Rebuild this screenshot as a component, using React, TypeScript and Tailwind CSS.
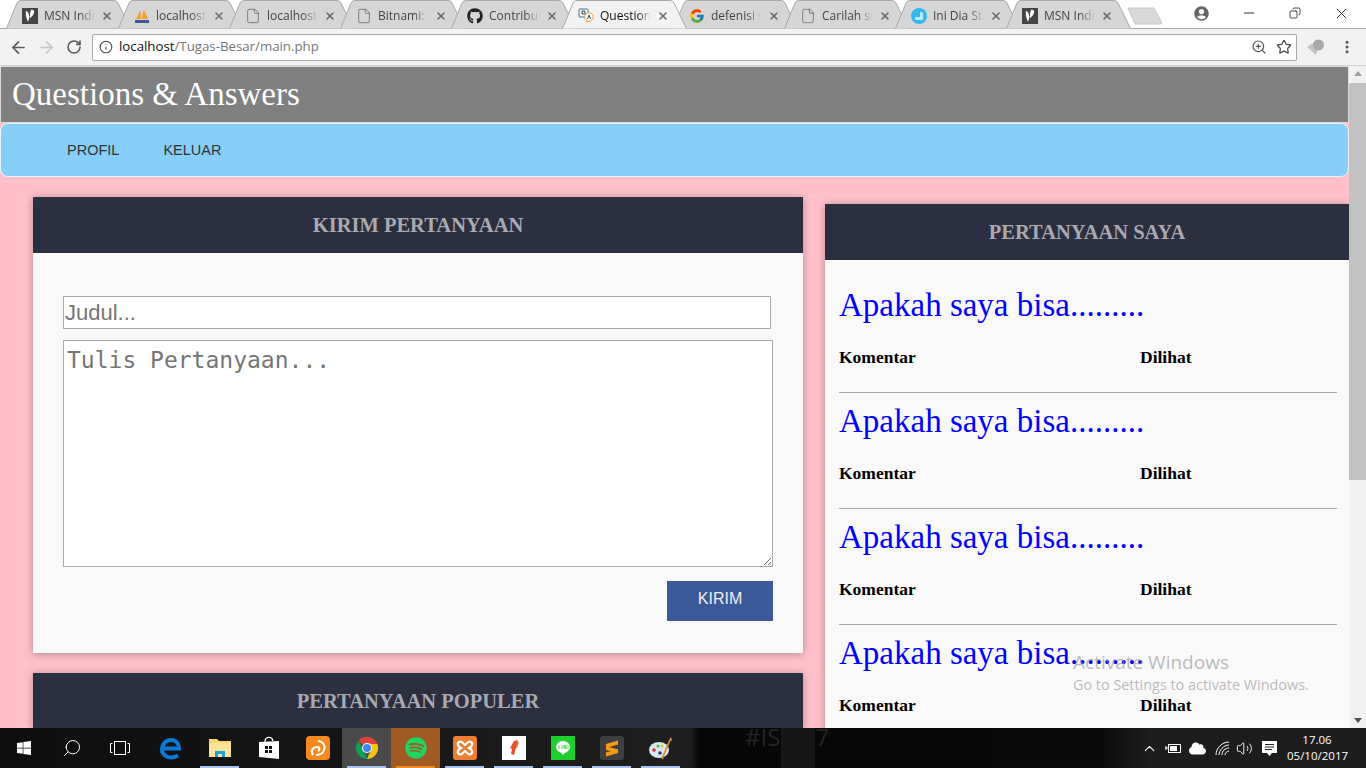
import { ArrowLeft, ArrowRight, ChevronUp, File, Info, MoreVertical, RotateCw, Search, Star, Volume2, X, ZoomIn, Minus, Copy } from 'lucide-react';
import { FaGithub, FaSpotify, FaWindows, FaCloud, FaUserCircle } from 'react-icons/fa';
import { FcGoogle } from 'react-icons/fc';
import type { ReactNode } from 'react';

const MsnIcon = () => (
  <svg width="16" height="16" viewBox="0 0 16 16">
    <rect width="16" height="16" fill="#444" />
    <path d="M4 3c2 0 3 3 3.500 6L6 14c-1-3-3-7-2-11zM9 2c2-1 4 1 3 3-1 2-2 4-4 5 0-3 0-6 1-8z" fill="#fff" />
  </svg>
);

const PmaIcon = () => (
  <svg width="16" height="16" viewBox="0 0 16 16">
    <path d="M2 11C4 8 5 5 6 2c1 3 1 6 1 9zM8 11c0-4 1-7 2-9 1 3 3 6 4 9z" fill="#f0a030" />
    <rect x="1" y="12" width="14" height="3" fill="#3a5a9a" />
  </svg>
);

const QaIcon = () => (
  <svg width="16" height="16" viewBox="0 0 16 16">
    <rect x="1" y="1" width="9" height="8" rx="1" fill="#fff" stroke="#4a6a90" />
    <circle cx="11" cy="9" r="4.200" fill="#fff" stroke="#e89a30" />
    <path d="M9 13l-1 2 3-1.500z" fill="#e89a30" />
    <path d="M4 3h3v3H4z" fill="none" stroke="#234" strokeWidth="0.900" />
    <path d="M9.500 11l1.500-4 1.500 4" fill="none" stroke="#234" strokeWidth="0.900" />
  </svg>
);

const StudioIcon = () => (
  <svg width="16" height="16" viewBox="0 0 16 16">
    <circle cx="8" cy="8" r="8" fill="#35b8ee" />
    <rect x="4" y="4" width="8" height="8" rx="1.500" fill="#bdeafb" />
    <rect x="4" y="4" width="5" height="5" fill="#35b8ee" />
  </svg>
);

const PageIcon = () => <File size={16} strokeWidth={1.200} className="text-[#666]" />;

const tabs: { title: string; icon: ReactNode; active?: boolean }[] = [
  { title: 'MSN Indonesia', icon: <MsnIcon /> },
  { title: 'localhost / phpMyAdmin', icon: <PmaIcon /> },
  { title: 'localhost', icon: <PageIcon /> },
  { title: 'Bitnami: Open', icon: <PageIcon /> },
  { title: 'Contribute', icon: <FaGithub size={16} className="text-[#222]" /> },
  { title: 'Questions & Answers', icon: <QaIcon />, active: true },
  { title: 'defenisi sistem', icon: <FcGoogle size={16} /> },
  { title: 'Carilah soal', icon: <PageIcon /> },
  { title: 'Ini Dia Startup', icon: <StudioIcon /> },
  { title: 'MSN Indonesia', icon: <MsnIcon /> },
];

const ChromeTab = ({ title, icon, active, first }: { title: string; icon: ReactNode; active?: boolean; first?: boolean }) => (
  <div className={`relative flex h-[28px] items-center pl-4 pt-[3px] ${first ? 'w-[112px]' : 'w-[111px]'} ${active ? 'z-10' : ''}`}>
    <svg width="125" height="29" viewBox="0 0 125 29" className="absolute left-0 top-0">
      <path
        d="M0.500 28.500 L11 3 Q12 0.500 15 0.500 L108 0.500 Q111 0.500 112 3 L124.500 28.500"
        fill={active ? '#f2f2f2' : '#d6d6d6'}
        stroke="#a8a8a8"
      />
    </svg>
    <div className="relative flex items-center gap-[6px]">
      <span className="flex h-4 w-4 items-center justify-center">{icon}</span>
      <span
        className={
          active
            ? 'w-[51px] overflow-hidden whitespace-nowrap text-[12px] text-[#111] [mask-image:linear-gradient(to_right,black_75%,transparent)]'
            : 'w-[51px] overflow-hidden whitespace-nowrap text-[12px] text-[#444] [mask-image:linear-gradient(to_right,black_70%,transparent)]'
        }
      >
        {title}
      </span>
      <X size={12} strokeWidth={3} className="text-[#666]" />
    </div>
  </div>
);

const ChromeTop = () => (
  <div className="font-['Open_Sans',sans-serif]">
    <div className="relative flex h-[28px] bg-white pl-[6px]">
      {tabs.map((t, i) => (
        <ChromeTab key={i} title={t.title} icon={t.icon} active={t.active} first={i === 0} />
      ))}
      <svg width="36" height="18" viewBox="0 0 36 18" className="z-10 ml-[10px] mt-[7px]">
        <path d="M1 1 H27 L35 16 Q35 17 33 17 H8 Z" fill="#d9d9d9" stroke="#c8c8c8" />
      </svg>
      <div className="ml-auto flex h-[28px] items-center pb-[2px] text-[#111]">
        <FaUserCircle size={15} className="mr-[32px] text-[#666]" />
        <Minus size={16} strokeWidth={1.300} className="mr-[32px]" />
        <Copy size={12} strokeWidth={1.500} className="mr-[32px] -scale-x-100" />
        <X size={17} strokeWidth={1.200} className="mr-[16px]" />
      </div>
    </div>
    <div className="flex h-[38px] items-center border-t border-b border-t-[#a8a8a8] border-b-[#d0d0d0] bg-[#f2f2f2]">
      <ArrowLeft size={19} strokeWidth={2.200} className="ml-[9px] text-[#5a5a5a]" />
      <ArrowRight size={19} strokeWidth={2} className="ml-[9px] text-[#c4c4c4]" />
      <RotateCw size={16} strokeWidth={2.400} className="ml-[10px] text-[#5a5a5a]" />
      <div className="ml-[10px] flex h-[27px] w-[1205px] items-center rounded-[2px] border border-[#a9a9a9] bg-white">
        <Info size={14} strokeWidth={1.800} className="ml-[6px] text-[#444]" />
        <span className="ml-[6px] text-[13.250px] text-[#111]">localhost</span>
        <span className="text-[13.250px] text-[#777]">/Tugas-Besar/main.php</span>
        <ZoomIn size={16} strokeWidth={1.800} className="ml-auto mr-[9px] text-[#555]" />
        <Star size={16} strokeWidth={1.800} className="mr-[4px] text-[#444]" />
      </div>
      <svg width="18" height="16" viewBox="0 0 18 16" className="ml-[10px]">
        <path d="M0 8l8-5 4 1-3 12z" fill="#c4c4c4" />
        <circle cx="11.500" cy="6" r="5.500" fill="#a8a8a8" />
      </svg>
      <MoreVertical size={16} strokeWidth={2.500} className="ml-[14px] text-[#555]" />
    </div>
  </div>
);

const Scrollbar = () => (
  <div className="flex w-[17px] shrink-0 flex-col items-center bg-[#f1f1f1]">
    <div className="mt-[5px] h-0 w-0 border-x-[4px] border-b-[5px] border-x-transparent border-b-[#a3a3a3]" />
    <div className="mt-[7px] h-[397px] w-[17px] bg-[#c1c1c1]" />
    <div className="mt-auto mb-[5px] h-0 w-0 border-x-[4px] border-t-[5px] border-x-transparent border-t-[#505050]" />
  </div>
);

const CardHeader = ({ children }: { children: ReactNode }) => (
  <div className="flex h-14 items-center justify-center bg-[#2c2f3f] text-[20.500px] font-bold text-[#a9a9b2]">{children}</div>
);

const questionRows = [0, 1, 2, 3];

const Page = () => (
  <div className="relative h-[662px] w-[1349px] overflow-hidden bg-[#ffc0cb] font-['Liberation_Serif',serif]">
    <div className="flex h-[57px] items-center border border-[#dcdcdc] bg-[#808080] pl-[11px] text-[33px] text-white">
      Questions &amp; Answers
    </div>
    <nav className="flex h-[54px] items-center gap-[44px] rounded-lg border border-[#e8f4fc] bg-[#87cefa] pl-[66px] pt-[2px] font-['Liberation_Sans',sans-serif] text-[14.500px] text-[#333]">
      <span>PROFIL</span>
      <span>KELUAR</span>
    </nav>
    <div className="flex gap-[22px] pl-[33px] pt-[20px]">
      <div className="flex w-[770px] shrink-0 flex-col gap-5">
        <section className="h-[456px] bg-[#f9f9f9] shadow-[0_1px_8px_rgba(0,0,0,0.3)]">
          <CardHeader>KIRIM PERTANYAAN</CardHeader>
          <div className="flex flex-col pl-[30px] pt-[43px]">
            <input
              placeholder="Judul..."
              className="h-[33px] w-[708px] border border-[#a9a9a9] bg-white px-[1px] font-['Liberation_Sans',sans-serif] text-[22px] outline-none placeholder:text-[#757575]"
            />
            <textarea
              placeholder="Tulis Pertanyaan..."
              className="mt-[11px] h-[227px] w-[710px] border border-[#a9a9a9] bg-white px-[3px] pt-[4px] font-['DejaVu_Sans_Mono',monospace] text-[23px] leading-[31px] outline-none placeholder:text-[#757575]"
            />
            <button className="ml-[604px] mt-[14px] h-10 w-[106px] bg-[#3b5998] pb-1 font-['Liberation_Sans',sans-serif] text-[16px] text-[#f0f0f0]">
              KIRIM
            </button>
          </div>
        </section>
        <section className="bg-[#f9f9f9] shadow-[0_1px_8px_rgba(0,0,0,0.3)]">
          <CardHeader>PERTANYAAN POPULER</CardHeader>
        </section>
      </div>
      <section className="mt-[7px] h-[600px] w-[524px] shrink-0 bg-[#f9f9f9] shadow-[0_1px_8px_rgba(0,0,0,0.3)]">
        <CardHeader>PERTANYAAN SAYA</CardHeader>
        <div className="pl-[14px] pr-3 pt-[17px]">
          {questionRows.map((r) => (
            <div key={r} className="h-[116px] border-b border-[#a9a9a9] pt-[6px] last:border-b-0">
              <div className="h-[44px] text-[33px] leading-[44px] text-[#0000ff]">Apakah saya bisa.........</div>
              <div className="mt-[18px] flex text-[17.500px] font-bold leading-[24px] text-black">
                <span className="w-[301px]">Komentar</span>
                <span>Dilihat</span>
              </div>
            </div>
          ))}
        </div>
      </section>
    </div>
  </div>
);

const EdgeLogo = () => (
  <svg width="24" height="24" viewBox="0 0 24 24">
    <path d="M4 12.500h16c0-5-3-8.500-8-8.500-5 0-9 4-9 9.500 0 5.500 5 8 9 8 3 0 5-.8 7-2" fill="none" stroke="#0a78d7" strokeWidth="4" />
  </svg>
);

const TaskViewIcon = () => (
  <svg width="20" height="14" viewBox="0 0 20 14" fill="none" stroke="#fff">
    <rect x="4.500" y="0.500" width="11" height="13" />
    <path d="M2.500 2.500H.5v9h2M17.500 2.500h2v9h-2" />
  </svg>
);

const ChromeLogo = () => (
  <svg width="24" height="24" viewBox="0 0 24 24">
    <path d="M12 12 L3.400 5 A11 11 0 0 1 22.300 8 L12 8z" fill="#db4437" />
    <path d="M12 23 A11 11 0 0 1 3.400 5 L9 14z" fill="#0f9d58" />
    <path d="M22.300 8 A11 11 0 0 1 12 23 L16 14 L12 8z" fill="#f4c20d" />
    <circle cx="12" cy="12" r="5" fill="#fff" />
    <circle cx="12" cy="12" r="4" fill="#4285f4" />
  </svg>
);

const FolderLogo = () => (
  <svg width="24" height="20" viewBox="0 0 24 20">
    <path d="M1 1h8l2 2h12v16H1z" fill="#f8d775" />
    <rect x="1" y="5" width="22" height="14" fill="#fbe59a" />
    <path d="M7 19v-6h10v6h-3v-3h-4v3z" fill="#1f9ee0" />
  </svg>
);

const StoreLogo = () => (
  <svg width="22" height="24" viewBox="0 0 22 24">
    <path d="M1 6l20-1v18l-20-2z" fill="#fff" />
    <path d="M7 6c0-6 7-6 8-1" fill="none" stroke="#fff" strokeWidth="1.300" />
    <path d="M7 10h3v3H7zM11 10h3v3h-3zM7 14h3v3H7zM11 14h3v3h-3z" fill="#111" />
  </svg>
);

const UcLogo = () => (
  <svg width="24" height="24" viewBox="0 0 24 24">
    <rect width="24" height="24" rx="4" fill="#f7891f" />
    <path d="M7 19c-3-4 0-8 4-8 3 0 3 3 1 4M12 5c4 0 8 4 6 9-1 3-4 5-8 5" fill="none" stroke="#fff" strokeWidth="2" />
  </svg>
);

const XamppLogo = () => (
  <svg width="24" height="24" viewBox="0 0 24 24">
    <rect width="24" height="24" rx="3" fill="#ef7d32" />
    <path d="M6 6c3-2 4 2 6 3 2-1 3-5 6-3s0 5-2 6c2 1 5 4 2 6s-4-2-6-3c-2 1-3 5-6 3s0-5 2-6C6 11 3 8 6 6z" fill="none" stroke="#fff" strokeWidth="2.200" />
  </svg>
);

const PdfLogo = () => (
  <svg width="24" height="24" viewBox="0 0 24 24">
    <rect width="24" height="24" fill="#fff" />
    <path d="M12 5l4-1-2 8-2 7-3-1 1-5-2-1z" fill="#e8502a" />
    <path d="M15 6h2l-2 6-1 0z" fill="#f07040" />
  </svg>
);

const LineLogo = () => (
  <svg width="24" height="24" viewBox="0 0 24 24">
    <rect width="24" height="24" fill="#1fce2e" />
    <ellipse cx="12" cy="11" rx="7" ry="6" fill="#fff" />
    <path d="M10 16l2 3 3-3z" fill="#fff" />
    <path d="M8 9v4M11 9v4M13 13V9l2 4V9M17 9v4" stroke="#1fce2e" strokeWidth="0.800" fill="none" />
  </svg>
);

const SublimeLogo = () => (
  <svg width="24" height="24" viewBox="0 0 24 24">
    <rect width="24" height="24" rx="3" fill="#3f3f3f" />
    <path d="M6 8l12-3.500v4L6 12zM6 10l12 3.500v4L6 14zM6 16.500l12-3.500v4L6 20.500z" fill="#f89a12" />
  </svg>
);

const PaintLogo = () => (
  <svg width="24" height="24" viewBox="0 0 24 24">
    <ellipse cx="10" cy="14" rx="10" ry="8" fill="#d6e8f5" />
    <circle cx="5" cy="14" r="1.800" fill="#d83a30" />
    <circle cx="9" cy="10" r="1.600" fill="#5cb040" />
    <circle cx="13" cy="10" r="1.500" fill="#e8c030" />
    <circle cx="11" cy="17" r="1.800" fill="#2a3a60" />
    <path d="M13 23L21 4" stroke="#d98a20" strokeWidth="1.800" />
    <path d="M20 4l2-3 1 4z" fill="#c8a060" />
  </svg>
);

const taskItems: { key: string; icon: ReactNode; open?: boolean; bg?: string; bar?: string }[] = [
  { key: 'edge', icon: <EdgeLogo /> },
  { key: 'folder', icon: <FolderLogo />, open: true },
  { key: 'store', icon: <StoreLogo /> },
  { key: 'uc', icon: <UcLogo /> },
  { key: 'chrome', icon: <ChromeLogo />, open: true, bg: 'bg-[#4a4a4a]' },
  { key: 'spotify', icon: <FaSpotify size={22} className="text-[#1ed760]" />, open: true, bg: 'bg-[#a05a24]', bar: 'bg-[#f08a24]' },
  { key: 'xampp', icon: <XamppLogo />, open: true },
  { key: 'pdf', icon: <PdfLogo />, open: true },
  { key: 'line', icon: <LineLogo />, open: true },
  { key: 'sublime', icon: <SublimeLogo />, open: true },
  { key: 'paint', icon: <PaintLogo />, open: true },
];

const Taskbar = () => (
  <div className="relative flex h-10 items-center overflow-hidden bg-[linear-gradient(to_right,#0d0d0d,#1f1f1f_690px,#060606_700px,#0a0a0a_1100px,#1d1d1d_1150px)] text-white">
    <span className="absolute left-[745px] top-[-9px] font-['Open_Sans',sans-serif] text-[24px] text-[#242424]">#ISC 17</span>
    <div className="absolute bottom-0 left-[781px] top-0 w-[34px] bg-[#161616]" />
    <FaWindows size={16} className="ml-4" />
    <Search size={20} strokeWidth={1.200} className="ml-[30px] -scale-x-100" />
    <span className="ml-[28px]">
      <TaskViewIcon />
    </span>
    <div className="relative ml-[16px] flex h-10">
      {taskItems.map((t) => (
        <div key={t.key} className={`relative flex h-10 w-[49px] items-center justify-center ${t.bg ?? ''}`}>
          {t.icon}
          {t.open && <div className={`absolute bottom-0 left-[5px] right-[5px] h-[2px] ${t.bar ?? 'bg-[#a9c4f0]'}`} />}
        </div>
      ))}
    </div>
    <div className="relative ml-auto flex items-center pr-[19px]">
      <ChevronUp size={17} strokeWidth={1.500} className="mr-[7px]" />
      <svg width="16" height="12" viewBox="0 0 16 12" className="mr-[8px]">
        <rect x="3.500" y="2.500" width="12" height="8" fill="none" stroke="#fff" />
        <rect x="5" y="4" width="7" height="5" fill="#fff" />
        <path d="M0 6h3M1 4v4" stroke="#fff" />
      </svg>
      <FaCloud size={17} className="mr-[9px]" />
      <svg width="15" height="15" viewBox="0 0 15 15" fill="none" stroke="#fff" className="mr-[6px]">
        <path d="M1 14c0-7 6-13 13-13M4 14c0-5 5-10 10-10M7 14c0-4 3-7 7-7M10 14c0-2 2-4 4-4" />
      </svg>
      <Volume2 size={17} strokeWidth={1.300} className="mr-[8px]" />
      <svg width="17" height="17" viewBox="0 0 17 17" className="mr-[9px]">
        <path d="M1 1h15v12h-5l-2.500 3L6 13H1z" fill="#fff" />
        <path d="M4 4.500h9M4 7h9M4 9.500h7" stroke="#222" />
      </svg>
      <div className="w-[60px] text-center font-['Open_Sans',sans-serif] text-[11.500px] leading-[16px]">
        <div>17.06</div>
        <div className="whitespace-nowrap">05/10/2017</div>
      </div>
    </div>
  </div>
);

export default function App() {
  return (
    <div className="relative flex h-screen w-full flex-col overflow-hidden bg-white">
      <ChromeTop />
      <div className="flex h-[662px]">
        <Page />
        <Scrollbar />
      </div>
      <Taskbar />
      <div className="pointer-events-none absolute left-[1073px] top-[649px] font-['Open_Sans',sans-serif] text-[#8e8e8e]/60">
        <div className="text-[19px] leading-[26px]">Activate Windows</div>
        <div className="mt-[1px] text-[14.400px] leading-[18px]">Go to Settings to activate Windows.</div>
      </div>
    </div>
  );
}
